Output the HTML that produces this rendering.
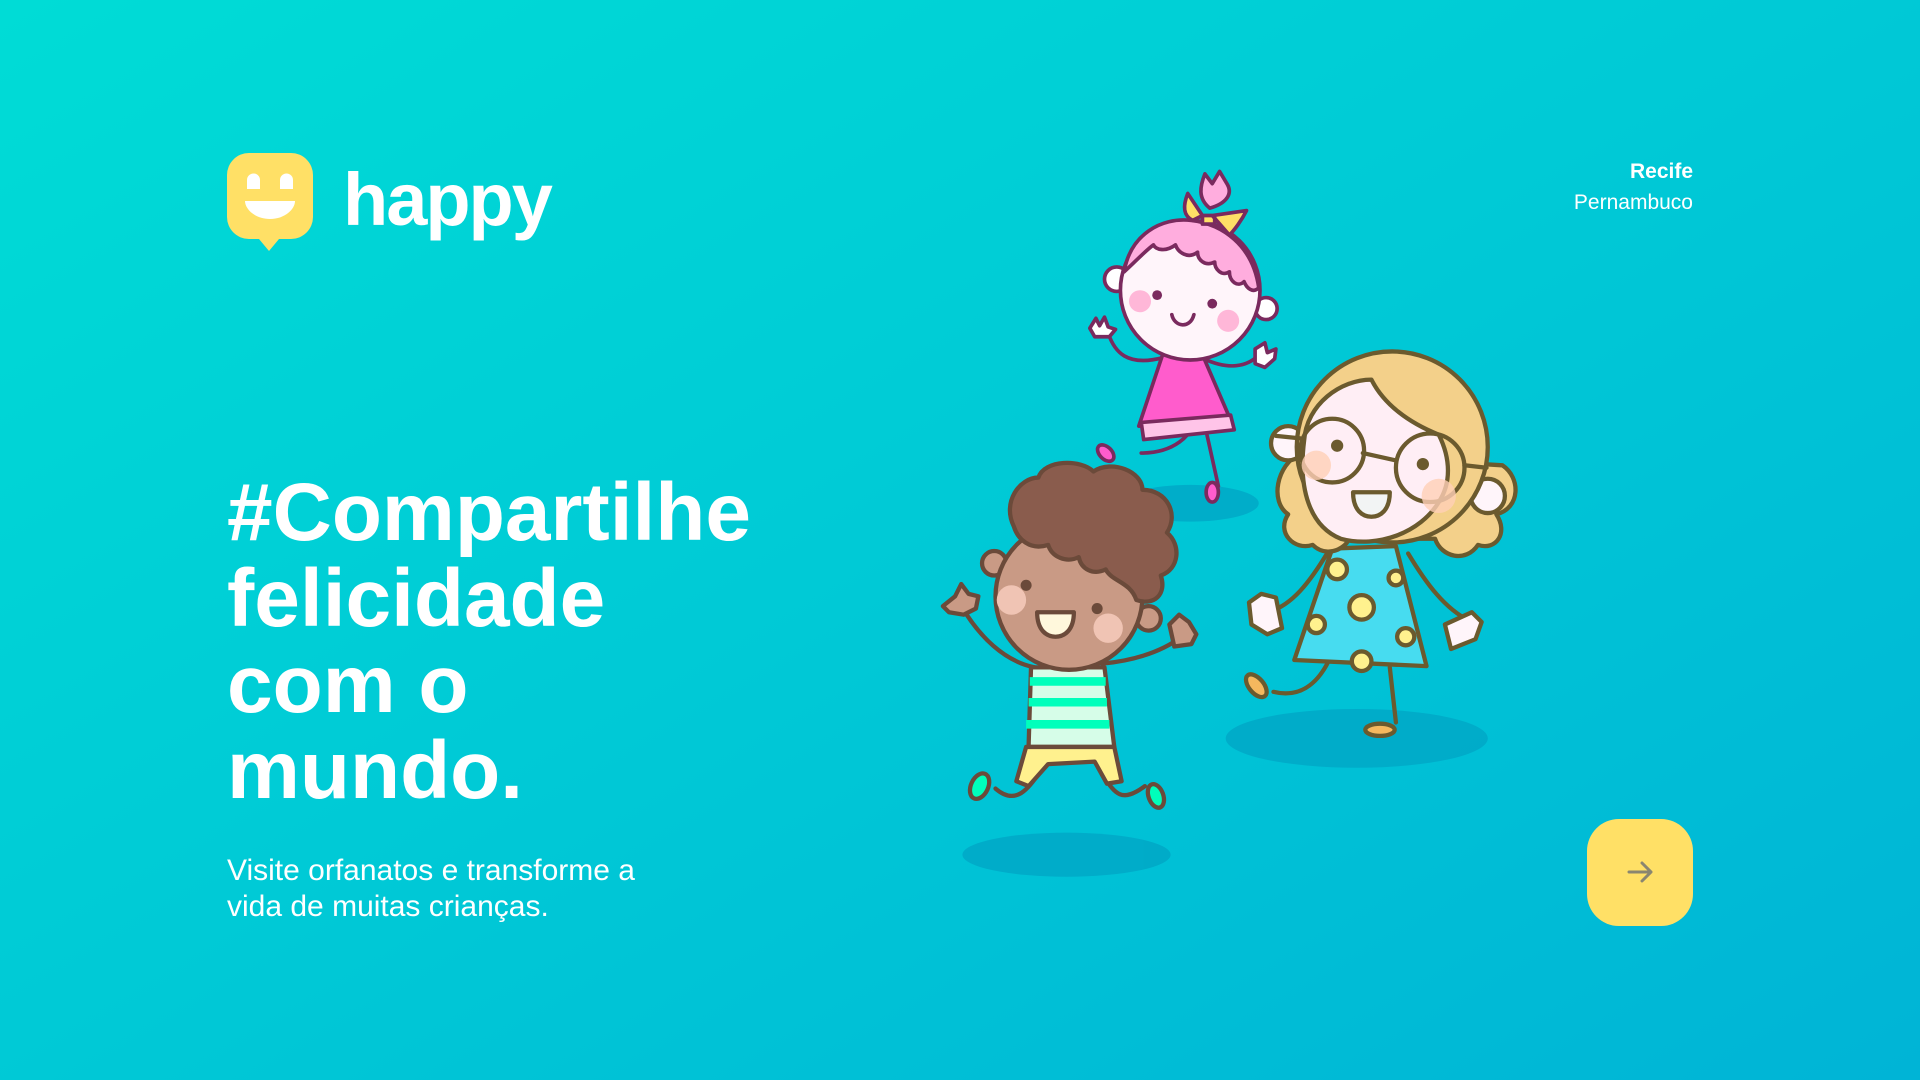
<!DOCTYPE html>
<html><head><meta charset="utf-8"><style>
html,body{margin:0;padding:0}
body{width:1920px;height:1080px;overflow:hidden;position:relative;background:linear-gradient(150deg,#00dcd6 0%,#00c9d6 50%,#00b4d6 100%);font-family:"Liberation Sans",sans-serif;color:#fff}
.logo{position:absolute;left:227px;top:153px}
.happy{position:absolute;left:343px;top:163px;font-size:74px;font-weight:bold;letter-spacing:-2px;line-height:1}
h1{position:absolute;left:227px;top:470px;margin:0;font-size:82px;line-height:86px;font-weight:bold;letter-spacing:0px}
p{position:absolute;left:227px;top:853px;margin:0;font-size:30px;line-height:36px;width:460px}
.loc{position:absolute;right:227px;top:156px;text-align:right;font-size:21px;line-height:31px}
.btn{position:absolute;left:1587px;top:819px;width:106px;height:107px;border-radius:32px;background:#ffe066}
svg.art{position:absolute;left:0;top:0}
</style></head><body>
<svg class="logo" width="86" height="100" viewBox="0 0 86 100">
<path d="M22 0h42a22 22 0 0 1 22 22v42a22 22 0 0 1-22 22h-12l-10 12-10-12h-10a22 22 0 0 1-22-22v-42a22 22 0 0 1 22-22z" fill="#ffe066"/>
<path d="M20 36v-9a6.5 6.5 0 0 1 13 0v9z" fill="#fff"/>
<path d="M53 36v-9a6.5 6.5 0 0 1 13 0v9z" fill="#fff"/>
<path d="M18 48h50c0 8-10 18-25 18s-25-10-25-18z" fill="#fff"/>
</svg>
<div class="happy">happy</div>
<div class="loc"><b>Recife</b><br>Pernambuco</div>
<h1>#Compartilhe<br>felicidade<br>com o<br>mundo.</h1>
<p>Visite orfanatos e transforme a vida de muitas crianças.</p>
<div class="btn"><svg width="106" height="107" viewBox="0 0 106 107"><path d="M42 53h22M55 44l9 9-9 9" stroke="#8a8670" stroke-width="3" fill="none" stroke-linecap="round" stroke-linejoin="round"/></svg></div>

<svg class="art" width="1920" height="1080" viewBox="0 0 1568 882">
<g fill="#00a6c5" opacity="0.8">
<ellipse cx="871" cy="698" rx="85" ry="18"/>
<ellipse cx="1108" cy="603" rx="107" ry="24"/>
<ellipse cx="972" cy="411" rx="56" ry="15"/>
</g>
<!-- pink girl -->
<g stroke="#7a2a5e" stroke-width="3" stroke-linecap="round" stroke-linejoin="round">
<path d="M972 352c0 0-10 18-40 18M985 352l10 45" fill="none"/>
<ellipse cx="903" cy="370" rx="8" ry="5" fill="#ff5ccc" transform="rotate(45 903 370)"/>
<ellipse cx="990" cy="402" rx="5" ry="8" fill="#ff5ccc"/>
<path d="M905 272c5 15 15 28 45 20M1028 290c-10 10-25 12-45 3" fill="none"/>
<path d="M950 288l-20 60 75 -5-25 -58z" fill="#ff5ccc"/>
<path d="M932 345l73 -6 3 12-74 8z" fill="#ffc4e8"/>
<path d="M890 268l5-8 3 6 4-7 3 8 6 2-5 6-12 0z" fill="#fff"/>
<path d="M1025 285l8-5 2 8 7-3-1 8-8 7-8-3z" fill="#fff"/>
<circle cx="912" cy="228" r="10" fill="#fff"/>
<circle cx="1034" cy="252" r="9" fill="#fff"/>
<circle cx="972" cy="237" r="57" fill="#fff5fa"/>
<path d="M918 222c5-30 30-45 55-42s50 20 55 55c-5 5-10 0-12-5-5 5-12 0-12-8-6 4-12-2-12-8-8 4-14-2-14-8-8 6-16 0-18-6-8 6-16 4-18 0-8 6-15 14-24 22z" fill="#ffadde"/>
<path d="M982 176l-12-18c-4 10-4 18 4 22zM990 176l28-4c-4 8-10 16-14 20zM982 176h10v7h-10z" fill="#ffe066"/>
<path d="M988 170c-10-8-8-18-4-28l6 8 6-10 6 10c5 8 0 16-14 20z" fill="#ffadde"/>
</g>
<circle cx="945" cy="241" r="4" fill="#7a2a5e"/><circle cx="990" cy="248" r="4" fill="#7a2a5e"/>
<circle cx="931" cy="246" r="9" fill="#ffb7d8"/><circle cx="1003" cy="262" r="9" fill="#ffb7d8"/>
<path d="M957 257c2 10 15 12 18 0" stroke="#7a2a5e" stroke-width="3" fill="none" stroke-linecap="round"/>
<!-- blonde girl -->
<g stroke="#6b5a2e" stroke-width="3.5" stroke-linecap="round" stroke-linejoin="round">
<path d="M1085 540c-10 20-25 30-45 25M1135 545l5 45" fill="none"/>
<ellipse cx="1026" cy="560" rx="6" ry="11" fill="#f5b85e" transform="rotate(-40 1026 560)"/>
<ellipse cx="1127" cy="596" rx="12" ry="5" fill="#f5b85e"/>
<path d="M1085 450c-15 25-30 45-50 50M1150 452c15 25 30 45 50 55" fill="none"/>
<path d="M1030 485l12 3 5 25-12 5-13-8-2-18z" fill="#fff5fa"/>
<path d="M1180 510l22-10 8 8-5 14-20 8z" fill="#fff5fa"/>
<path d="M1088 448l52-2 25 98-108-5z" fill="#47dcf0"/>
<g fill="#fff18e"><circle cx="1112" cy="496" r="10"/><circle cx="1092" cy="465" r="8"/><circle cx="1075" cy="510" r="7"/><circle cx="1148" cy="520" r="7"/><circle cx="1140" cy="472" r="6"/><circle cx="1112" cy="540" r="8"/></g>
<path d="M1062 370c-20 10-25 40-10 50-10 15 5 30 20 25 10 10 25 5 30-5h70c5 15 25 20 35 5 15 5 25-10 15-25 20-5 20-30 5-40z" fill="#f3d08a"/>
<circle cx="1052" cy="362" r="14" fill="#fff5fa"/>
<circle cx="1215" cy="405" r="14" fill="#fff5fa"/>
<circle cx="1137" cy="365" r="78" fill="#f3d08a"/>
<path d="M1065 360c2-30 30-50 55-50 10 20 30 35 55 45 10 20 10 40 0 55-15 25-50 38-80 30-25-10-35-40-30-80z" fill="#ffeef5"/>
<circle cx="1088" cy="368" r="26" fill="none"/><circle cx="1168" cy="382" r="28" fill="none"/>
<path d="M1113 370l27 6M1062 358l-20-2M1196 380l18 2" fill="none"/>
<path d="M1105 402h30c0 15-8 20-15 20s-15-5-15-20z" fill="#f2f4f4"/>
</g>
<circle cx="1092" cy="364" r="5" fill="#6b5a2e"/><circle cx="1162" cy="379" r="5" fill="#6b5a2e"/>
<circle cx="1075" cy="380" r="12" fill="#ffcfb6" opacity=".8"/><circle cx="1175" cy="405" r="14" fill="#ffcfb6" opacity=".8"/>
<!-- boy -->
<g stroke="#6b4a3a" stroke-width="3.5" stroke-linecap="round" stroke-linejoin="round">
<path d="M848 632c-10 15-20 25-35 12M900 632c10 15 15 25 35 10" fill="none"/>
<ellipse cx="800" cy="642" rx="7" ry="11" fill="#00ffbb" transform="rotate(25 800 642)"/>
<ellipse cx="944" cy="650" rx="6" ry="10" fill="#00ffbb" transform="rotate(-20 944 650)"/>
<path d="M785 495c15 25 35 45 60 50M965 520c-20 15-45 20-65 22" fill="none"/>
<path d="M770 495l10-8 5-10 6 8 8 2-2 10-10 5-12-2z" fill="#c99a85"/>
<path d="M955 510l8-8 8 6 6 10-4 8-14 2z" fill="#c99a85"/>
<path d="M842 545l60 0 8 65-70 0z" fill="#d6fde8"/>
<path d="M841 553h62v7h-62zM840 570h64v7h-64zM838 588h68v7h-68z" fill="#00ffbb" stroke-width="0"/>
<path d="M838 610h72l6 28-12 2-10-18-38 2-16 18-10-4z" fill="#fff18e"/>
<circle cx="812" cy="460" r="10" fill="#c99a85"/><circle cx="938" cy="505" r="10" fill="#c99a85"/>
<circle cx="873" cy="487" r="60" fill="#c99a85"/>
<path d="M828 430c-10-20 5-40 20-40 5-15 35-15 45-5 15-10 40 0 40 15 20 0 30 20 20 35 12 10 10 30-5 35 5 15-5 25-20 20-5-15-20-15-25-25-10 5-20 0-22-10-10 5-22 0-25-10-15 5-25-5-28-15z" fill="#8a5c4d"/>
<path d="M847 500h30c0 15-8 20-15 20s-15-5-15-20z" fill="#fff8dc"/>
</g>
<circle cx="838" cy="478" r="4.5" fill="#6b4a3a"/><circle cx="896" cy="497" r="4.5" fill="#6b4a3a"/>
<circle cx="826" cy="490" r="12" fill="#f0c4b4"/><circle cx="905" cy="513" r="12" fill="#f0c4b4"/>
</svg>
</body></html>
